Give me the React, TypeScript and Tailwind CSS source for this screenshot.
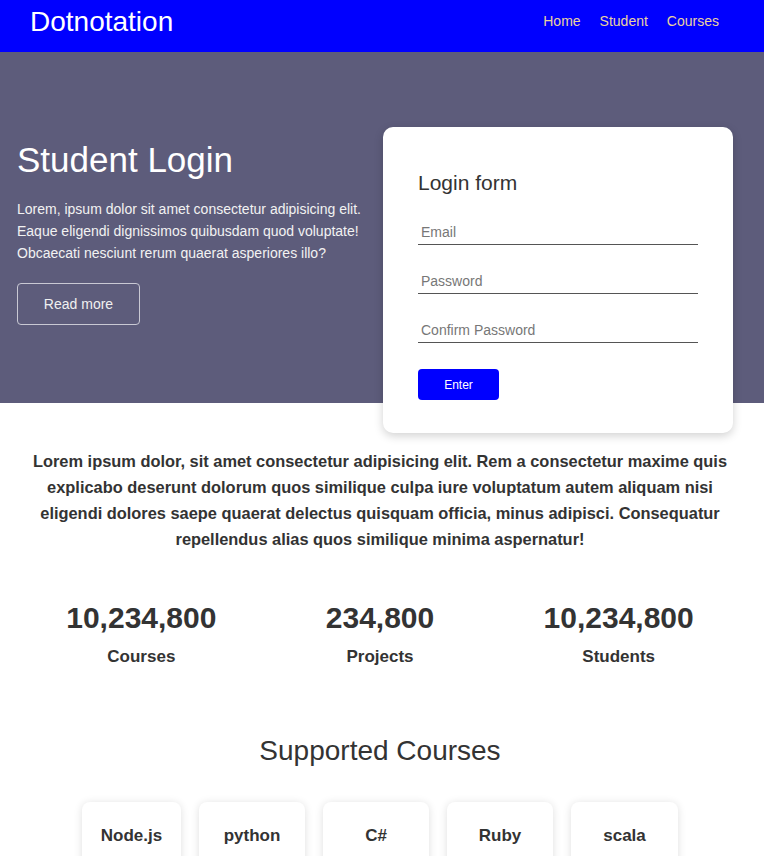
import React from "react";

const stats = [
	{ value: "10,234,800", label: "Courses" },
	{ value: "234,800", label: "Projects" },
	{ value: "10,234,800", label: "Students" },
];

const courses = [
	{ name: "Node.js", w: "w-[99px]" },
	{ name: "python", w: "w-[106px]" },
	{ name: "C#", w: "w-[106px]" },
	{ name: "Ruby", w: "w-[106px]" },
	{ name: "scala", w: "w-[107px]" },
];

export default function App() {
	return (
		<div className="min-h-[856px] bg-white font-['Liberation_Sans',Arial,sans-serif] overflow-hidden">
			{/* navbar */}
			<nav className="h-[52px] bg-[#0000ff] flex justify-between pl-[30px] pr-[45px]">
				<div className="pt-[6px] text-[28px] leading-[32px] text-white">
					Dotnotation
				</div>
				<ul className="flex gap-[19px] pt-[11px] text-[14px] leading-[20px] text-[#ead29e]">
					<li>Home</li>
					<li>Student</li>
					<li>Courses</li>
				</ul>
			</nav>

			{/* hero */}
			<section className="h-[351px] bg-[#5d5c7b] flex justify-between pl-[17px] pr-[31px]">
				<div className="pt-[88px]">
					<h1 className="text-[35px] leading-[40px] text-white">Student Login</h1>
					<p className="mt-[18px] w-[366px] text-[14px] leading-[22px] text-[#f2f2f2]">
						Lorem, ipsum dolor sit amet consectetur adipisicing elit. Eaque
						eligendi dignissimos quibusdam quod voluptate! Obcaecati nesciunt
						rerum quaerat asperiores illo?
					</p>
					<button className="mt-[19px] w-[123px] h-[42px] border border-[#c9c9d4] rounded-[4px] text-[14px] text-[#f0f0f0]">
						Read more
					</button>
				</div>
				<div className="relative z-10 mt-[75px] w-[350px] h-[306px] shrink-0 bg-white rounded-[10px] shadow-[0_3px_10px_rgba(0,0,0,0.18)] px-[35px] pt-[44px]">
					<h2 className="text-[21px] leading-[24px] text-[#333]">Login form</h2>
					<form className="mt-[20px] flex flex-col gap-[19px] w-[280px]">
						<input
							placeholder="Email"
							className="h-[30px] border-b border-[#555] pl-[3px] pt-[4px] text-[14px] outline-none placeholder:text-[#777]"
						/>
						<input
							placeholder="Password"
							type="password"
							className="h-[30px] border-b border-[#555] pl-[3px] pt-[4px] text-[14px] outline-none placeholder:text-[#777]"
						/>
						<input
							placeholder="Confirm Password"
							type="password"
							className="h-[30px] border-b border-[#555] pl-[3px] pt-[4px] text-[14px] outline-none placeholder:text-[#777]"
						/>
						<button
							type="button"
							className="mt-[7px] w-[81px] h-[31px] bg-[#0000ff] rounded-[4px] text-[12px] text-white"
						>
							Enter
						</button>
					</form>
				</div>
			</section>

			{/* about */}
			<section className="pt-[45px] pl-[28px] pr-[32px]">
				<p className="text-center text-[16.4px] leading-[26px] font-bold text-[#333]">
					Lorem ipsum dolor, sit amet consectetur adipisicing elit. Rem a
					consectetur maxime quis explicabo deserunt dolorum quos similique culpa
					iure voluptatum autem aliquam nisi eligendi dolores saepe quaerat
					delectus quisquam officia, minus adipisci. Consequatur repellendus alias
					quos similique minima aspernatur!
				</p>
			</section>

			{/* stats */}
			<section className="mt-[48px] ml-[22px] w-[716px] grid grid-cols-3 text-center text-[#333]">
				{stats.map((s, i) => (
					<div key={i}>
						<div className="text-[30px] leading-[36px] font-bold">{s.value}</div>
						<div className="mt-[9px] text-[17px] leading-[24px] font-bold">{s.label}</div>
					</div>
				))}
			</section>

			{/* courses */}
			<section className="mt-[66px] pr-[4px]">
				<h2 className="text-center text-[28px] leading-[32px] text-[#333]">
					Supported Courses
				</h2>
				<div className="mt-[35px] flex justify-center gap-[18px]">
					{courses.map((c) => (
						<div
							key={c.name}
							className={`${c.w} h-[80px] bg-white rounded-[8px] shadow-[0_1px_8px_rgba(0,0,0,0.13)] pt-[22px] text-center text-[17px] leading-[24px] font-bold text-[#333]`}
						>
							{c.name}
						</div>
					))}
				</div>
			</section>
		</div>
	);
}
